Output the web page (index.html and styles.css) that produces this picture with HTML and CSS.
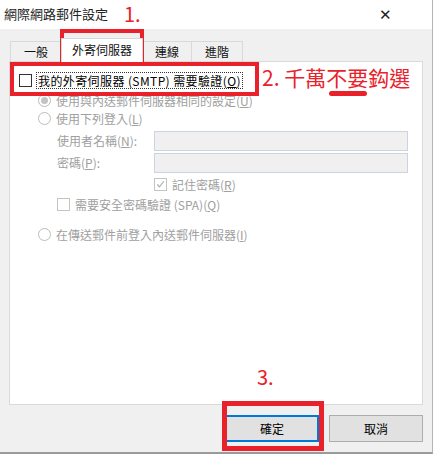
FILE: index.html
```html
<!DOCTYPE html>
<html lang="zh-Hant">
<head>
<meta charset="UTF-8" />
<title>網際網路郵件設定</title>
<link rel="stylesheet" href="styles.css">
</head>
<body>
  <div class="window">
    <div class="titlebar">
      <span class="title">網際網路郵件設定</span>
      <span class="close">✕</span>
    </div>

    <div class="content">
      <div class="tabs">
        <div class="tab">一般</div>
        <div class="tab active">外寄伺服器</div>
        <div class="tab">連線</div>
        <div class="tab">進階</div>
      </div>

      <div class="panel">
        <div class="row main-check">
          <span class="box"></span>
          <span class="focus">我的外寄伺服器 (SMTP) 需要驗證(<u>O</u>)</span>
        </div>

        <div class="options">
          <div class="row radio-row">
            <span class="radio checked"></span>
            <span>使用與內送郵件伺服器相同的設定(<u>U</u>)</span>
          </div>
          <div class="row radio-row">
            <span class="radio"></span>
            <span>使用下列登入(<u>L</u>)</span>
          </div>

          <div class="login">
            <div class="field">
              <label>使用者名稱(<u>N</u>):</label>
              <span class="input"></span>
            </div>
            <div class="field">
              <label>密碼(<u>P</u>):</label>
              <span class="input"></span>
            </div>
            <div class="row remember">
              <span class="box ticked">
                <svg viewBox="0 0 12 12"><polyline points="2.5 6.5 5 9 9.5 3"></polyline></svg>
              </span>
              <span>記住密碼(<u>R</u>)</span>
            </div>
            <div class="row spa">
              <span class="box"></span>
              <span>需要安全密碼驗證 (SPA)(<u>Q</u>)</span>
            </div>
          </div>

          <div class="row radio-row last">
            <span class="radio"></span>
            <span>在傳送郵件前登入內送郵件伺服器(<u>I</u>)</span>
          </div>
        </div>
      </div>

      <div class="buttons">
        <button class="btn default">確定</button>
        <button class="btn">取消</button>
      </div>
    </div>
  </div>

  <!-- annotations drawn over the screenshot -->
  <div class="mark num1">1.</div>
  <div class="mark frame1"></div>
  <div class="mark frame2"></div>
  <div class="mark note">2. 千萬<span class="under">不要</span>鈎選</div>
  <div class="mark num3">3.</div>
  <div class="mark frame3"></div>
</body>
</html>
```

FILE: styles.css
```css
*, *::before, *::after {
  box-sizing: border-box;
}

body {
  margin: 0;
  background: #fff;
  font-family: "Noto Sans CJK TC", "Liberation Sans", sans-serif;
  font-size: 12px;
  color: #000;
  position: relative;
  width: 438px;
  height: 469px;
  overflow: hidden;
}

u {
  text-decoration: underline;
  text-underline-offset: 1px;
}

.window {
  width: 433px;
  height: 454px;
  background: #f0f0f0;
  border-right: 1px solid #b4b4b4;
  border-bottom: 2px solid #9a9a9a;
  display: flex;
  flex-direction: column;
}

.titlebar {
  height: 29px;
  background: #fff;
  display: flex;
  align-items: center;
  justify-content: space-between;
  padding: 0 40px 2px 4px;
}

.title {
  font-size: 13px;
  color: #222;
}

.close {
  font-size: 15px;
  color: #222;
}

.content {
  flex: 1;
  padding: 8px 9px 0 9px;
  display: flex;
  flex-direction: column;
}

/* Tabs */
.tabs {
  display: flex;
  align-items: flex-end;
  height: 24px;
  padding-left: 1px;
}

.tab {
  height: 20px;
  padding: 0 9px;
  border: 1px solid #d9d9d9;
  border-bottom: none;
  background: #f0f0f0;
  line-height: 19px;
  font-size: 12px;
  color: #111;
  margin-right: -1px;
}

.tab:nth-child(1) { width: 52px; text-align: center; }
.tab:nth-child(3) { width: 50px; text-align: center; }
.tab:nth-child(4) { width: 52px; text-align: center; }

.tab.active {
  height: 24px;
  background: #fff;
  position: relative;
  z-index: 1;
  margin-bottom: -1px;
  line-height: 22px;
  width: 82px;
  text-align: center;
}

.panel {
  height: 344px;
  background: #fff;
  border: 1px solid #d9d9d9;
  padding: 6px 0 0 9px;
  display: flex;
  flex-direction: column;
}

.row {
  display: flex;
  align-items: center;
  gap: 5px;
  height: 18px;
}

.main-check {
  height: 20px;
  margin-top: 2px;
}

.focus {
  outline: 1px dotted #333;
  padding: 0 1px;
  line-height: 15px;
  letter-spacing: 0.4px;
}

.box {
  width: 13px;
  height: 13px;
  border: 1px solid #333;
  background: #fff;
  flex: none;
  display: flex;
  align-items: center;
  justify-content: center;
}

.options {
  color: #a0a0a0;
  padding-left: 19px;
  margin-top: 1px;
  display: flex;
  flex-direction: column;
}

.radio {
  width: 13px;
  height: 13px;
  border: 1px solid #bcbcbc;
  border-radius: 50%;
  background: #fff;
  flex: none;
  display: flex;
  align-items: center;
  justify-content: center;
}

.radio.checked::after {
  content: "";
  width: 7px;
  height: 7px;
  border-radius: 50%;
  background: #c4c4c4;
}

.radio-row.last {
  margin-top: 12px;
}

.login {
  padding-left: 19px;
  display: flex;
  flex-direction: column;
}

.field {
  display: flex;
  align-items: center;
  height: 21px;
  margin-top: 1px;
}

.field label {
  width: 97px;
  flex: none;
}

.field:first-child {
  margin-top: 3px;
}

.input {
  width: 254px;
  height: 20px;
  background: #f0f0f0;
  border: 1px solid #ccd4df;
}

.remember {
  margin-left: 97px;
  margin-top: 2px;
}

.spa {
  margin-top: 2px;
}

.options .box {
  border-color: #c4c4c4;
}

.box.ticked svg {
  width: 12px;
  height: 12px;
  stroke: #b0b0b0;
  stroke-width: 1.3;
  fill: none;
}

/* Bottom buttons */
.buttons {
  display: flex;
  justify-content: flex-end;
  gap: 10px;
  padding: 10px 0 0;
}

.btn {
  width: 94px;
  height: 27px;
  font-family: inherit;
  font-size: 12px;
  color: #000;
  background: #e1e1e1;
  border: 1px solid #adadad;
}

.btn.default {
  border: 2px solid #0078d7;
}

/* Annotations */
.mark {
  position: absolute;
  color: #e8212b;
  font-family: "Noto Sans CJK TC", "Liberation Sans", sans-serif;
}

.num1 {
  left: 124px;
  top: 0;
  font-size: 20px;
  line-height: 28px;
}

.frame1 {
  left: 60px;
  top: 29px;
  width: 84px;
  height: 34px;
  border: 4px solid #e8212b;
  border-bottom: none;
}

.frame2 {
  left: 10px;
  top: 62px;
  width: 249px;
  height: 34px;
  border: 4px solid #e8212b;
}

.note {
  left: 262px;
  top: 62px;
  font-size: 21px;
  line-height: 30px;
  letter-spacing: 0;
}

.note .under {
  position: relative;
}

.note .under::after {
  content: "";
  position: absolute;
  left: 3px;
  right: 1px;
  bottom: -4px;
  height: 5px;
  border-radius: 3px;
  background: #e8212b;
}

.num3 {
  left: 257px;
  top: 363px;
  font-size: 20px;
  line-height: 28px;
}

.frame3 {
  left: 222px;
  top: 401px;
  width: 102px;
  height: 50px;
  border: 5px solid #e8212b;
}
```
